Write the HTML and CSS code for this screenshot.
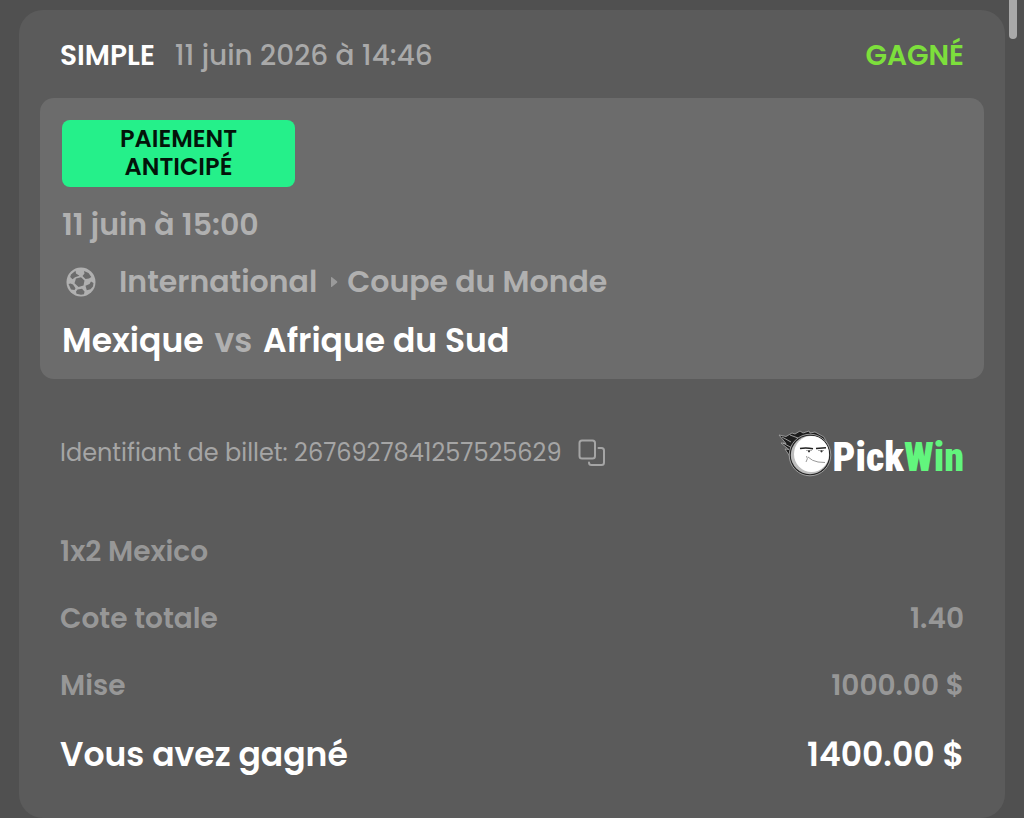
FILE: index.html
```html
<!DOCTYPE html>
<html lang="fr">
<head>
<meta charset="utf-8">
<meta name="viewport" content="width=device-width, initial-scale=1">
<title>PickWin – Billet</title>
<link rel="stylesheet" href="styles.css">
</head>
<body>
<div class="scroll-thumb"></div>
<main class="ticket">
  <header class="ticket-header">
    <div class="ticket-kind"><strong>SIMPLE</strong><time datetime="2026-06-11T14:46">11 juin 2026 à 14:46</time></div>
    <span class="status">GAGNÉ</span>
  </header>
  <section class="match">
    <div class="badge">PAIEMENT ANTICIPÉ</div>
    <time class="kickoff" datetime="2026-06-11T15:00">11 juin à 15:00</time>
    <div class="league">
      <svg class="ball" viewBox="0 0 30 30" aria-hidden="true">
        <circle cx="15" cy="15" r="14.500" fill="currentColor"/>
        <g fill="#6c6c6c">
          <path d="M10 11.500 15 10.200l3.500 3.300-1 5-5 1.500-4-3.700z"/>
          <path d="M5 7.500 9.500 3.800 10 6.500l3.500 2.300-4.500 1.500-2.500 2L4.200 10z"/>
          <path d="m18 4 4.500 2 2.800 4-2.300 1.500-3.500.5L16.500 9l2-2.500z"/>
          <path d="m2.500 17 2-.500L7 17.500l2.500 3.800-1 1.700-3.500-.500z"/>
          <path d="m19.500 18.800 4-1.800 1.500-2.500 2.500 1.500-.5 3.500-2.500 2.800-3.700 1z"/>
          <path d="m10 24.500 1.500-2 4.500-.700 2.500 2.700-.5 2.800-3 .5-4.500-1z"/>
        </g>
      </svg>
      <span>International</span>
      <svg class="arrow" viewBox="0 0 7 12" aria-hidden="true"><path d="M0 1.5v9q0 1 1 .2l5-4q.8-.7 0-1.4l-5-4Q0 .5 0 1.5z" fill="currentColor"/></svg>
      <span>Coupe du Monde</span>
    </div>
    <h1 class="teams">Mexique <span>vs</span> Afrique du Sud</h1>
  </section>
  <section class="reference">
    <div class="ticket-id">
      <span>Identifiant de billet: 2676927841257525629</span>
      <button class="copy" type="button" aria-label="Copier l'identifiant">
        <svg viewBox="0 0 28 28" fill="none" stroke="currentColor" stroke-width="2" stroke-linecap="round" stroke-linejoin="round"><rect x="1.5" y="1.5" width="15.5" height="18" rx="2.5"/><path d="M20.500 9h3q2.500 0 2.500 2.500v12q0 2.500-2.500 2.500H13.500q-2.500 0-2.500-2.500"/></svg>
      </button>
    </div>
    <div class="brand">
      <svg class="mascot" viewBox="0 0 54 48" aria-hidden="true">
        <path d="M13 29 7 20l4 .5L3 14l5 .500L1 6l7 1.500L14 4l3 1 5-3 3 2 6-2 1 2 5-1 9 5 4 8-28 18z" fill="#1c1c1c" stroke="#aaa" stroke-width=".8"/>
        <path d="m4 8 9 5M5 14l9 5M12 6l8 3" fill="none" stroke="#bbb" stroke-width=".8"/>
        <circle cx="32" cy="26" r="20.800" fill="#252525" stroke="#b8b8b8" stroke-width=".8"/>
        <circle cx="32" cy="26" r="19.200" fill="#bdbdbd"/>
        <ellipse cx="33.500" cy="25" rx="17.500" ry="18" fill="#fff"/>
        <path d="M22 19.500q6-1 13 .2M38 19.500l10-.7" stroke="#222" stroke-width="1.500" fill="none"/>
        <path d="M28 21.500h6M40 21.500h6" stroke="#999" stroke-width=".8"/>
        <path d="M28.500 27q2 2.500-.5 6M30 28q4 4 10 5l7 .5" stroke="#999" stroke-width="1" fill="none"/>
        <circle cx="31" cy="22.300" r="1.100" fill="#333"/><circle cx="43.500" cy="22.300" r="1.100" fill="#333"/>
      </svg>
      <span class="wordmark">Pick<span>Win</span></span>
    </div>
  </section>
  <dl class="summary">
    <div class="row"><dt>1x2 Mexico</dt></div>
    <div class="row"><dt>Cote totale</dt><dd>1.40</dd></div>
    <div class="row"><dt>Mise</dt><dd>1000.00 $</dd></div>
    <div class="row total"><dt>Vous avez gagné</dt><dd>1400.00 $</dd></div>
  </dl>
</main>
</body>
</html>
```
FILE: styles.css
```css
* { box-sizing: border-box; }
body {
  margin: 0;
  background: #505050;
  color: #fff;
  font-family: Poppins, Inter, "Liberation Sans", sans-serif;
  font-size: 28px;
  line-height: 36px;
}
.scroll-thumb {
  position: fixed;
  top: 0;
  right: 7px;
  width: 8px;
  height: 39px;
  border-radius: 0 0 4px 4px;
  background: #a9a9a9;
}
.ticket {
  margin: 10px 19px 0;
  padding: 0 21px 43px;
  border-radius: 24px;
  background: #5b5b5b;
}
.ticket-header {
  display: flex;
  align-items: center;
  justify-content: space-between;
  height: 88px;
  padding: 4px 20px 0;
}
.ticket-kind { display: flex; gap: 20px; }
.ticket-kind strong { font-weight: 600; }
.ticket-kind time { color: #a9a9a9; font-weight: 500; }
.status { color: #7ddf3c; font-weight: 600; }
.match {
  display: flex;
  flex-direction: column;
  align-items: flex-start;
  padding: 22px 22px 18px;
  border-radius: 14px;
  background: #6c6c6c;
}
.badge {
  width: 233px;
  padding: 5px 40px 6px;
  border-radius: 8px;
  background: #25f08a;
  color: #03140a;
  font-size: 24px;
  font-weight: 600;
  line-height: 28px;
  text-align: center;
}
.kickoff { margin-top: 20px; color: #b0b0b0; font-size: 30px; font-weight: 600; }
.league {
  display: flex;
  align-items: center;
  margin-top: 21px;
  color: #b0b0b0;
  font-size: 30px;
  font-weight: 600;
}
.ball { width: 30px; height: 30px; margin: 0 23px 0 4px; }
.arrow { width: 7px; height: 12px; margin: 0 9px 0 14px; color: #9a9a9a; }
.teams { margin: 21px 0 0; font-size: 33px; font-weight: 600; line-height: 40px; }
.teams span { margin: 0 3px; color: #b0b0b0; }
.reference {
  display: flex;
  align-items: center;
  justify-content: space-between;
  margin-top: 48px;
  padding: 0 20px;
}
.ticket-id { display: flex; align-items: center; gap: 16px; color: #a5a5a5; font-size: 24px; }
.copy { display: flex; padding: 0; border: 0; background: none; color: #a5a5a5; }
.copy svg { width: 28px; height: 28px; }
.brand { display: flex; align-items: center; gap: 1px; }
.mascot { width: 54px; height: 48px; }
.wordmark {
  padding-top: 10px;
  font-family: "Luckiest Guy", "Roboto Condensed", "Barlow Condensed", Oswald, Roboto, sans-serif;
  font-size: 40px;
  font-weight: 900;
  line-height: 42px;
}
.wordmark span { color: #62f57d; }
.summary { margin: 55px 0 0; padding: 0 20px; color: #979797; font-weight: 600; }
.row { display: flex; justify-content: space-between; margin-bottom: 31px; }
.row dd { margin: 0; }
.total { margin: 0; color: #fff; font-size: 33px; line-height: 40px; }
```
